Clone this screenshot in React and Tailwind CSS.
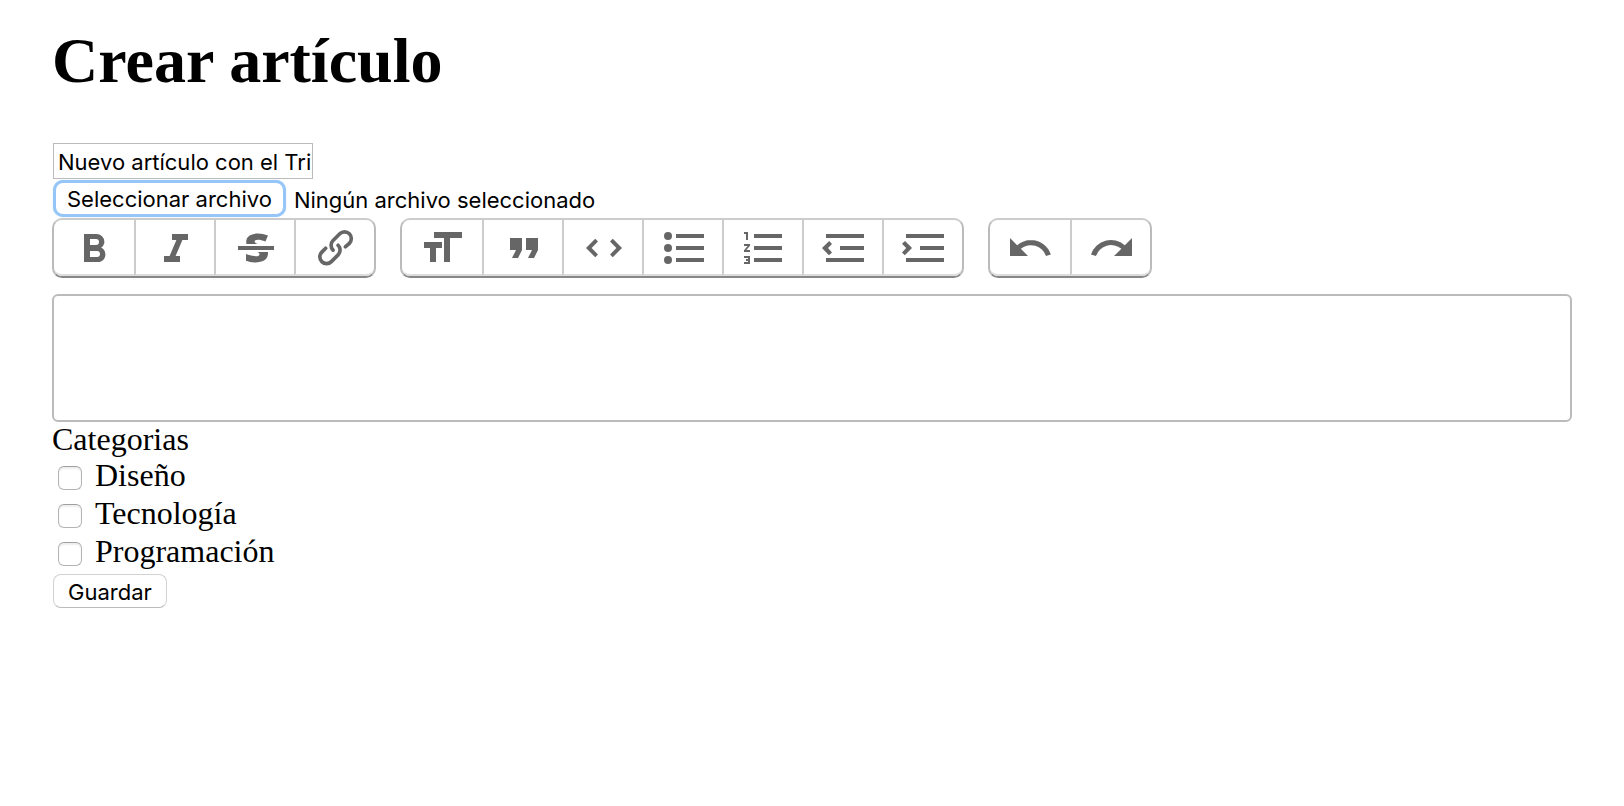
const GROUPS = [
  [
    { name: "Negrita", d: "M15.6 11.8c1-.7 1.6-1.8 1.6-2.8a4 4 0 0 0-4-4H7v14h7c2.1 0 3.7-1.7 3.7-3.8 0-1.5-.8-2.8-2.1-3.4zM10 7.5h3a1.5 1.5 0 1 1 0 3h-3v-3zm3.5 9H10v-3h3.5a1.5 1.5 0 1 1 0 3z" },
    { name: "Cursiva", d: "M10 5v3h2.2l-3.4 8H6v3h8v-3h-2.2l3.4-8H18V5h-8z" },
    { name: "Tachado", d: "M12.73 14l.28.14c.26.15.45.3.57.44.12.14.18.3.18.5 0 .3-.15.56-.44.75-.3.2-.76.3-1.39.3A13.52 13.52 0 0 1 7 14.95v3.37a10.64 10.64 0 0 0 4.84.88c1.26 0 2.35-.19 3.28-.56.93-.37 1.64-.9 2.14-1.57s.74-1.45.74-2.32c0-.26-.02-.51-.06-.75h-5.21zm-5.5-4c-.08-.34-.12-.7-.12-1.1 0-1.29.52-2.3 1.58-3.02 1.05-.72 2.5-1.08 4.34-1.08 1.62 0 3.28.34 4.97 1l-1.3 2.93c-1.47-.6-2.73-.9-3.8-.9-.55 0-.96.08-1.2.26-.26.17-.38.38-.38.64 0 .27.16.52.48.74.17.12.53.3 1.05.53H7.23zM3 13h18v-2H3v2z" },
    { name: "Enlace", d: "M9.88 13.7a4.3 4.3 0 0 1 0-6.07l3.37-3.37a4.26 4.26 0 0 1 6.07 0 4.3 4.3 0 0 1 0 6.06l-1.96 1.72a.91.91 0 1 1-1.3-1.3l1.97-1.71a2.46 2.46 0 0 0-3.48-3.48l-3.38 3.37a2.46 2.46 0 0 0 0 3.48.91.91 0 1 1-1.3 1.3zM4.25 19.46a4.3 4.3 0 0 1 0-6.07l1.93-1.9a.91.91 0 1 1 1.3 1.3l-1.93 1.9a2.46 2.46 0 0 0 3.48 3.48l3.37-3.38c.96-.96.96-2.52 0-3.48a.91.91 0 1 1 1.3-1.3 4.3 4.3 0 0 1 0 6.07l-3.38 3.38a4.26 4.26 0 0 1-6.07 0z" },
  ],
  [
    { name: "Título", d: "M12 9v3H9v7H6v-7H3V9h9zM8 4h14v3h-6v12h-3V7H8V4z" },
    { name: "Cita", d: "M6 17h3l2-4V7H5v6h3zm8 0h3l2-4V7h-6v6h3z" },
    { name: "Código", d: "M18.2 12L15 15.2l1.4 1.4L21 12l-4.6-4.6L15 8.8l3.2 3.2zM5.8 12L9 8.8 7.6 7.4 3 12l4.6 4.6L9 15.2 5.8 12z" },
    { name: "Lista", d: "M4 4a2 2 0 1 0 0 4 2 2 0 0 0 0-4zm0 6a2 2 0 1 0 0 4 2 2 0 0 0 0-4zm0 6a2 2 0 1 0 0 4 2 2 0 0 0 0-4zm4 3h14v-2H8v2zm0-6h14v-2H8v2zm0-8v2h14V5H8z" },
    { name: "Lista numerada", d: "M2 17h2v.5H3v1h1v.5H2v1h3v-4H2v1zm1-9h1V4H2v1h1v3zm-1 3h1.8L2 13.1v.9h3v-1H3.2L5 10.9V10H2v1zm5-6v2h14V5H7zm0 14h14v-2H7v2zm0-6h14v-2H7v2z" },
    { name: "Reducir nivel", d: "M3 19h19v-2H3v2zm7-6h12v-2H10v2zm-8.3-.3l2.8 2.9L6 14.2 4 12l2-2-1.4-1.5L1 12l.7.7zM3 5v2h19V5H3z" },
    { name: "Aumentar nivel", d: "M3 19h19v-2H3v2zm7-6h12v-2H10v2zm-6.9-1L1 14.2l1.4 1.4L6 12l-.7-.7-2.8-2.8L1 9.9 3.1 12zM3 5v2h19V5H3z" },
  ],
  [
    { name: "Deshacer", d: "M12.5 8c-2.6 0-5 1-6.9 2.6L2 7v9h9l-3.6-3.6A8 8 0 0 1 20 16l2.4-.8a10.5 10.5 0 0 0-10-7.2z" },
    { name: "Rehacer", d: "M18.4 10.6a10.5 10.5 0 0 0-16.9 4.6L4 16a8 8 0 0 1 12.7-3.6L13 16h9V7l-3.6 3.6z" },
  ],
];

const CATEGORIES = ["Diseño", "Tecnología", "Programación"];

function Toolbar() {
  return (
    <div className="flex flex-wrap gap-6">
      {GROUPS.map((group) => (
        <div
          key={group[0].name}
          className="flex rounded-[10px] border-2 border-t-[#ccc] border-r-[#bbb] border-b-[#888] border-l-[#bbb]"
        >
          {group.map((tool) => (
            <button
              key={tool.name}
              type="button"
              aria-label={tool.name}
              className="flex h-14 w-20 items-center justify-center border-b-2 border-l-2 border-b-[#ddd] border-l-[#ccc] pt-0.5 pl-0.5 first:rounded-bl-lg first:border-l-0 first:pl-0 last:rounded-br-lg"
            >
              <svg viewBox="0 0 24 24" className="size-12 fill-[#666]" aria-hidden="true">
                <path d={tool.d} />
              </svg>
            </button>
          ))}
        </div>
      ))}
    </div>
  );
}

export default function App() {
  return (
    <main className="bg-white px-[52px] pt-[25px] font-['Liberation_Serif',serif] text-black">
      <h1 className="mb-[46px] text-[64px] leading-[72px] font-bold">Crear artículo</h1>
      <form className="flex flex-col items-start" onSubmit={(e) => e.preventDefault()}>
        <input
          type="text"
          aria-label="Título del artículo"
          defaultValue="Nuevo artículo con el Tri"
          className="ml-px h-9 w-[260px] border border-[#bbb] pt-0.5 pl-1 font-[Inter,sans-serif] text-[22px] outline-none"
        />
        <label className="ml-px flex h-[39px] items-center gap-2 font-[Inter,sans-serif] text-[22px] leading-8">
          <input type="file" className="peer sr-only" />
          <span className="h-[37px] rounded-[10px] border-3 border-[#96c6f8] bg-white px-[11px] pt-px leading-[31px] shadow-[0_0_1px_#96c6f8]">
            Seleccionar archivo
          </span>
          <span className="pt-0.5">Ningún archivo seleccionado</span>
        </label>
        <Toolbar />
        <div
          contentEditable
          suppressContentEditableWarning
          role="textbox"
          aria-multiline="true"
          aria-label="Contenido"
          className="mt-4 min-h-32 w-full rounded-md border-2 border-[#bbb] p-3 text-[32px] outline-none"
        />
        <fieldset>
          <legend className="text-[32px] leading-[34px]">Categorias</legend>
          {CATEGORIES.map((category) => (
            <label key={category} className="flex items-center gap-[13px] pl-1.5 text-[32px] leading-[38px]">
              <input
                type="checkbox"
                className="mt-1.5 size-6 appearance-none rounded-md border border-[#b4b4b4] border-t-[#a0a0a0] bg-white shadow-[inset_0_2px_2px_#eee]"
              />
              {category}
            </label>
          ))}
        </fieldset>
        <button
          type="submit"
          className="mt-1 ml-px h-[34px] rounded-lg border border-[#d2d2d2] border-b-[#bbb] bg-white px-3.5 pt-px font-[Inter,sans-serif] text-[22px] leading-8"
        >
          Guardar
        </button>
      </form>
    </main>
  );
}
